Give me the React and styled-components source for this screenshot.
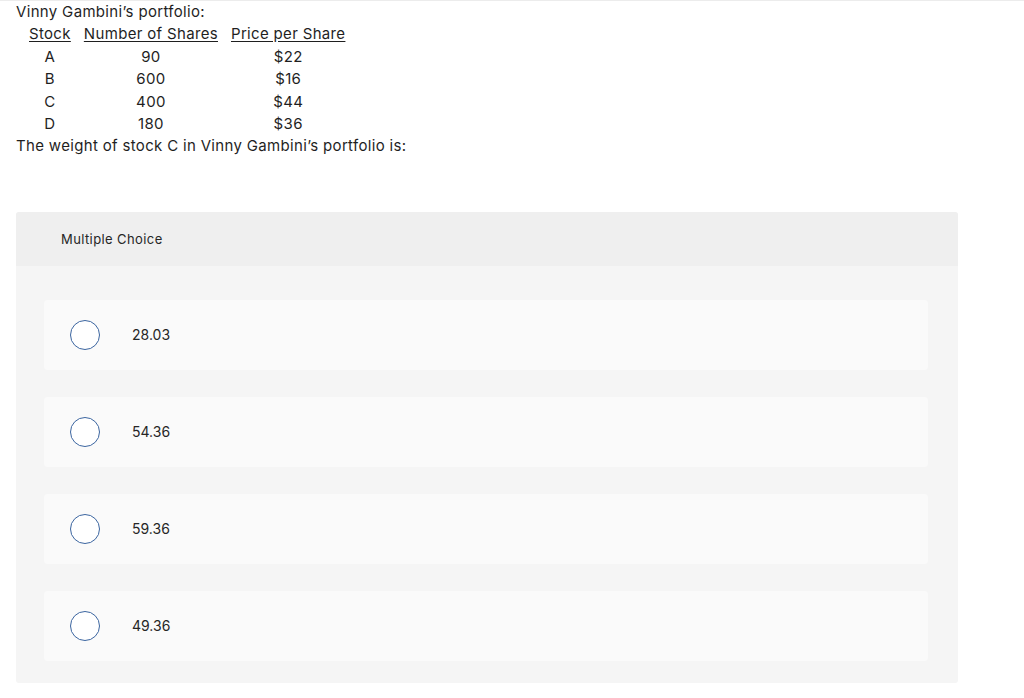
import React from "react";
import styled, { createGlobalStyle } from "styled-components";

const Global = createGlobalStyle`
  html, body { margin: 0; padding: 0; background: #ffffff; }
  body {
    border-top: 1px solid #ececec;
    font-family: Inter, "Open Sans", Arial, sans-serif;
    color: #1f1f1f;
  }
`;

const Question = styled.div`
  padding: 0 16px;
  font-size: 15px;
  letter-spacing: 0.33px;
  line-height: 22.4px;
`;

const Line = styled.div``;

const Table = styled.div`
  display: grid;
  grid-template-columns: auto auto auto;
  column-gap: 13px;
  justify-content: start;
  margin-left: 13px;
`;

const Cell = styled.div`
  text-align: center;
  text-decoration: ${(p) => (p.$head ? "underline" : "none")};
  text-underline-offset: 2px;
`;

const Panel = styled.section`
  margin: 54px 0 0 16px;
  width: 942px;
  border-radius: 3px;
  overflow: hidden;
  background: #f5f5f5;
`;

const PanelHeader = styled.div`
  height: 54px;
  display: flex;
  align-items: center;
  padding-left: 45px;
  background: #efefef;
  font-size: 13px;
  letter-spacing: 0.4px;
  color: #262626;
`;

const Options = styled.div`
  display: flex;
  flex-direction: column;
  gap: 27px;
  padding: 34px 30px 22px 28px;
`;

const Option = styled.label`
  height: 70px;
  display: flex;
  align-items: center;
  padding-left: 26px;
  background: #fafafa;
  border-radius: 4px;
  cursor: pointer;
`;

const Radio = styled.span`
  width: 30px;
  height: 30px;
  box-sizing: border-box;
  border: 1.4px solid #3b65a0;
  border-radius: 50%;
  background: #ffffff;
  flex: none;
`;

const OptionText = styled.span`
  margin-left: 32px;
  font-size: 14px;
  color: #262626;
`;

const rows = [
  ["A", "90", "$22"],
  ["B", "600", "$16"],
  ["C", "400", "$44"],
  ["D", "180", "$36"],
];

const choices = ["28.03", "54.36", "59.36", "49.36"];

export default function App() {
  return (
    <>
      <Global />
      <Question>
        <Line>Vinny Gambini’s portfolio:</Line>
        <Table>
          <Cell $head>Stock</Cell>
          <Cell $head>Number of Shares</Cell>
          <Cell $head>Price per Share</Cell>
          {rows.map((r) => r.map((c, i) => <Cell key={r[0] + i}>{c}</Cell>))}
        </Table>
        <Line>The weight of stock C in Vinny Gambini’s portfolio is:</Line>
      </Question>
      <Panel>
        <PanelHeader>Multiple Choice</PanelHeader>
        <Options>
          {choices.map((c) => (
            <Option key={c}>
              <Radio />
              <OptionText>{c}</OptionText>
            </Option>
          ))}
        </Options>
      </Panel>
    </>
  );
}
